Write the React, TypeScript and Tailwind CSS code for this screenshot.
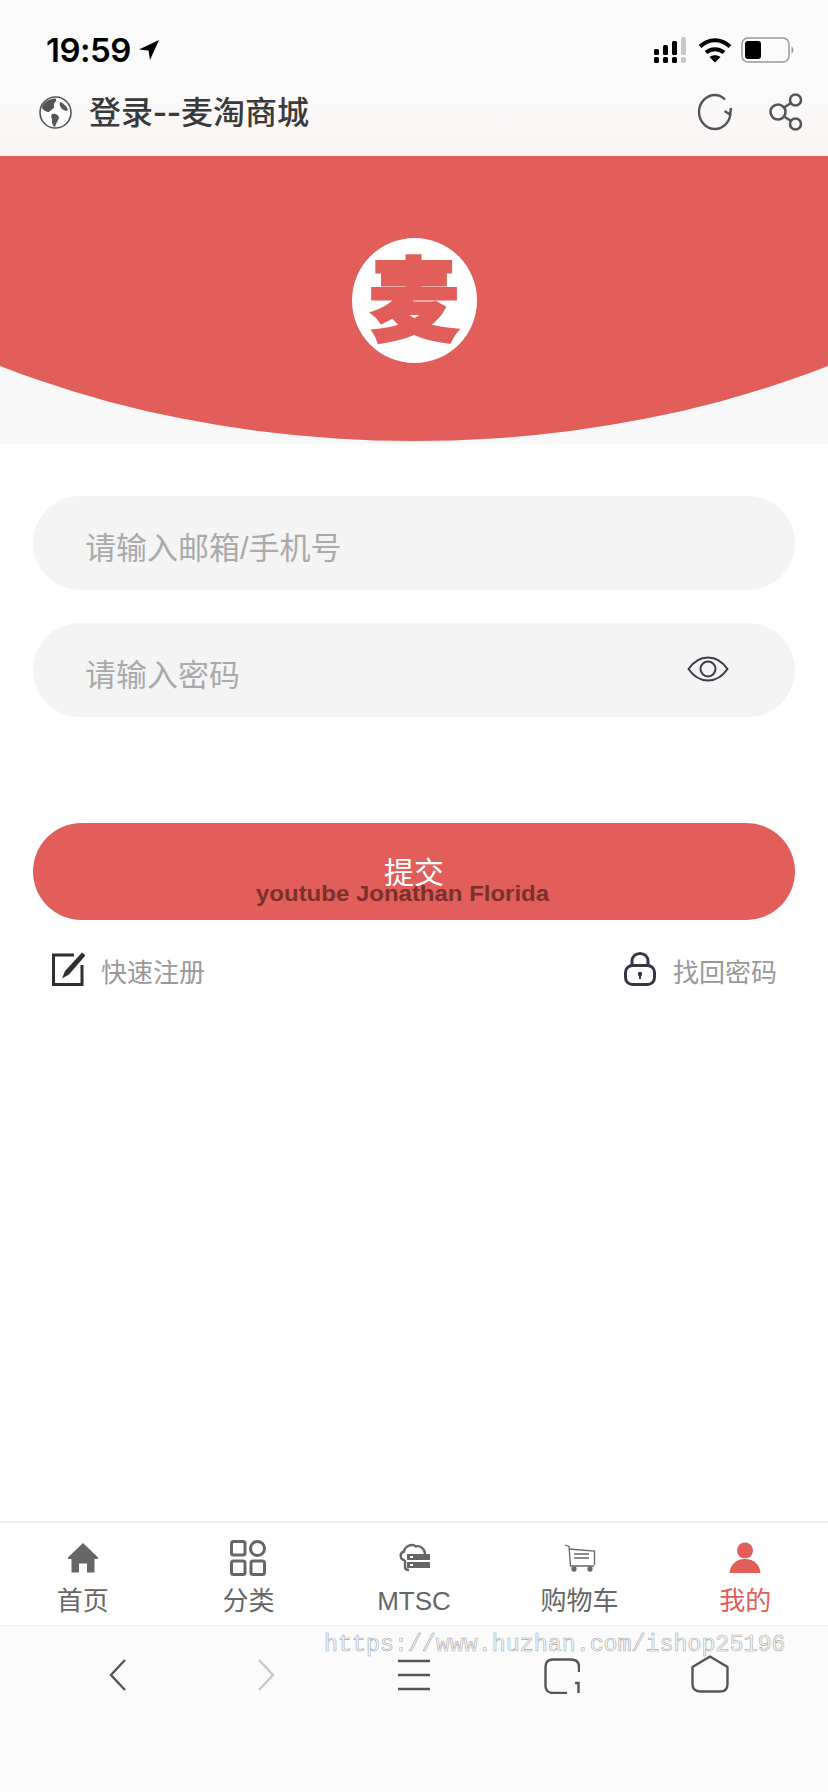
const font = "[font-family:'Liberation_Sans','Noto_Sans_CJK_SC',sans-serif]";

function StatusIcons() {
  return (
    <div className="-mr-[7px] flex items-center gap-[12px]">
      <svg width="32" height="28" viewBox="0 0 32 28">
        <g fill="#000">
          <rect x="0" y="13" width="5" height="6" rx="1.5" />
          <rect x="0" y="21" width="5" height="6" rx="1.5" />
          <rect x="9" y="9" width="5" height="10" rx="1.5" />
          <rect x="9" y="21" width="5" height="6" rx="1.5" />
          <rect x="18" y="5" width="5" height="14" rx="1.5" />
          <rect x="18" y="21" width="5" height="6" rx="1.5" />
        </g>
        <g fill="#c8c8c8">
          <rect x="27" y="1" width="5" height="18" rx="1.5" />
          <rect x="27" y="21" width="5" height="6" rx="1.5" />
        </g>
      </svg>
      <svg width="34" height="26" viewBox="0 0 34 26">
        <path d="M2 9.500C11 1 23 1 32 9.500" fill="none" stroke="#000" strokeWidth="4" />
        <path d="M8 15.500C13 11 21 11 26 15.500" fill="none" stroke="#000" strokeWidth="4" />
        <path d="M11.500 20 17 25.500 22.500 20C19 17.500 15 17.500 11.500 20Z" fill="#000" />
      </svg>
      <svg width="54" height="26" viewBox="0 0 54 26" className="-ml-[3px]">
        <rect x="1" y="1" width="47" height="24" rx="6" fill="none" stroke="#999" strokeWidth="1.500" />
        <rect x="4" y="4" width="16" height="18" rx="3" fill="#000" />
        <path d="M50.500 9.500C53 10.500 53 15.500 50.500 16.500Z" fill="#999" />
      </svg>
    </div>
  );
}

function Header() {
  return (
    <header className="h-[156px] bg-gradient-to-b from-[#fbfbfb] from-50% to-[#faf5f4] px-[40px]">
      <div className="mt-[32px] flex h-[36px] items-center justify-between">
        <div className="ml-[6px] flex items-center gap-[7px]">
          <span className="text-[33px] leading-[36px] font-semibold tracking-[-0.5px] text-black [font-family:'Inter',sans-serif]">
            19:59
          </span>
          <svg width="22" height="22" viewBox="0 0 22 22">
            <path d="M21 1 1 10.500 10.500 11.500 12 21Z" fill="#000" />
          </svg>
        </div>
        <StatusIcons />
      </div>
      <div className="mt-[24px] -mr-[15px] -ml-[1px] flex h-[40px] items-center justify-between">
        <div className="flex items-center gap-[17px]">
          <svg width="33" height="33" viewBox="0 0 33 33">
            <circle cx="16.500" cy="16.500" r="15.500" fill="#fff" stroke="#555" strokeWidth="1.600" />
            <path d="M8 5C11 3 16 2 17 3C18 6 14 7 15 10C16 12 12 14 10 16C7 16 4 14 3 12C3 9 5 7 8 5Z" fill="#555" />
            <path d="M13 18C16 17 20 19 20 22C19 25 17 27 16 31C13 30 13 26 13 23C12 21 12 19 13 18Z" fill="#555" />
            <path d="M21 6C24 7 28 10 29 14C27 16 25 14 23 13C21 11 20 8 21 6Z" fill="#555" />
          </svg>
          <span className={`text-[32px] leading-none font-medium text-[#3a3a3a] ${font}`}>
            登录<span className="align-[-2px] text-[42px] leading-none font-normal">--</span>麦淘商城
          </span>
        </div>
        <div className="flex items-center gap-[36px]">
          <svg width="36" height="38" viewBox="0 0 36 38" fill="none" stroke="#555" strokeWidth="2.400">
            <path d="M28 6.500C25 3.500 22 2 18 2C9.500 2 2 9.500 2 19C2 28.500 9.500 36 18 36C26 36 33 29 33.500 20" />
            <path d="M34 15 33 21.500 27.500 18" />
          </svg>
          <svg width="34" height="38" viewBox="0 0 34 38" fill="none" stroke="#555" strokeWidth="2.600">
            <circle cx="9" cy="19" r="7.500" />
            <circle cx="26.500" cy="7" r="5.500" />
            <circle cx="26.500" cy="31" r="5.500" />
            <path d="M15 14.500 22 10M15 23.500 22 28" />
          </svg>
        </div>
      </div>
    </header>
  );
}

function Hero() {
  return (
    <div className="h-[288px] bg-[#f8f8f8]">
      <div className="flex h-[285px] justify-center bg-[#e15e5a] pt-[82px] [clip-path:ellipse(800px_520px_at_50%_-235px)]">
        <div className="flex h-[125px] w-[125px] items-center justify-center rounded-full bg-white pb-[14px]">
          <span className="text-[90px] leading-none font-black text-[#e15e5a] [-webkit-text-stroke:3px_#e15e5a] [font-family:'Noto_Sans_CJK_SC',sans-serif]">
            麦
          </span>
        </div>
      </div>
    </div>
  );
}

function LoginForm() {
  return (
    <div className="px-[33px] pt-[52px]">
      <div className="flex h-[94px] items-center rounded-full bg-[#f4f4f4] px-[52px]">
        <input
          placeholder="请输入邮箱/手机号"
          className={`w-full bg-transparent pt-[12px] text-[31px] outline-none placeholder:text-[#aaaaaa] ${font}`}
        />
      </div>
      <div className="mt-[33px] flex h-[94px] items-center justify-between rounded-full bg-[#f4f4f4] pr-[66px] pl-[52px]">
        <input
          placeholder="请输入密码"
          className={`w-[400px] bg-transparent pt-[12px] text-[31px] outline-none placeholder:text-[#aaaaaa] ${font}`}
        />
        <svg width="42" height="26" viewBox="0 0 42 26" fill="none" stroke="#3b3b4a" strokeWidth="2" className="-mt-[2px]">
          <path d="M1.500 13C7 5 14 1.500 21 1.500C28 1.500 35 5 40.500 13C35 21 28 24.500 21 24.500C14 24.500 7 21 1.500 13Z" />
          <circle cx="21" cy="13" r="7.500" />
        </svg>
      </div>
      <button className="relative mt-[106px] block h-[97px] w-full rounded-full bg-[#e15e5a] pt-[2px] text-center">
        <span className={`text-[30px] text-white ${font}`}>提交</span>
        <span className="absolute top-[59px] left-[223px] origin-left scale-x-[1.09] text-[22px] leading-[24px] font-bold whitespace-nowrap text-[#7c2f2d] [font-family:'Liberation_Sans',sans-serif]">
          youtube Jonathan Florida
        </span>
      </button>
      <div className="mt-[32px] flex items-center justify-between pr-[18px] pl-[19px]">
        <div className="flex items-center gap-[16px]">
          <svg width="33" height="34" viewBox="0 0 33 34">
            <path d="M22 3H1.500V32.500H30V13" fill="none" stroke="#2f2f2f" strokeWidth="3" />
            <path d="M30 0.500 33.500 3.500 17 22.500 10 26.500 13 19Z" fill="#2f2f2f" />
          </svg>
          <span className={`pt-[8px] text-[26px] leading-none text-[#999999] ${font}`}>快速注册</span>
        </div>
        <div className="flex items-center gap-[17px]">
          <svg width="32" height="34" viewBox="0 0 32 34" fill="none" stroke="#353545" strokeWidth="3">
            <path d="M8 15V9.500C8 4.500 11.500 1.500 16 1.500C20.500 1.500 24 4.500 24 9.500V15" />
            <rect x="1.500" y="13.500" width="29" height="19" rx="7" />
            <circle cx="16" cy="22" r="2.200" fill="#353545" stroke="none" />
            <path d="M16 22V27" strokeWidth="2" />
          </svg>
          <span className={`pt-[8px] text-[26px] leading-none text-[#999999] ${font}`}>找回密码</span>
        </div>
      </div>
    </div>
  );
}

const tabs = [
  {
    label: "首页",
    color: "text-[#666666]",
    icon: (
      <svg width="32" height="32" viewBox="0 0 32 32">
        <path d="M16 1 31 15.500V17H27.500V30.500H20V21.500H12V30.500H4.500V17H1V15.500Z" fill="#666" />
      </svg>
    ),
  },
  {
    label: "分类",
    color: "text-[#666666]",
    icon: (
      <svg width="36" height="36" viewBox="0 0 36 36" fill="none" stroke="#666" strokeWidth="3">
        <rect x="1.500" y="1.500" width="13.500" height="13.500" rx="2" />
        <circle cx="27.500" cy="8.500" r="7" />
        <rect x="1.500" y="21" width="13.500" height="13.500" rx="2" />
        <rect x="21" y="21" width="13.500" height="13.500" rx="2" />
      </svg>
    ),
  },
  {
    label: "MTSC",
    color: "text-[#666666]",
    icon: (
      <svg width="32" height="30" viewBox="0 0 32 30">
        <path d="M7 17C2 17 1 10 6 8.500C7 3 14 0 18 3.500C22 2 27 6 27 11" fill="none" stroke="#666" strokeWidth="2.400" />
        <rect x="9" y="11" width="23" height="6" fill="#666" />
        <rect x="9" y="19" width="23" height="6" fill="#666" />
        <rect x="12" y="13" width="3" height="2" fill="#fff" />
        <rect x="12" y="21" width="3" height="2" fill="#fff" />
        <path d="M7 17V24C7 26 9 27 11 27" fill="none" stroke="#666" strokeWidth="2.400" />
      </svg>
    ),
  },
  {
    label: "购物车",
    color: "text-[#666666]",
    icon: (
      <svg width="32" height="28" viewBox="0 0 32 28" fill="none" stroke="#666" strokeWidth="1.300">
        <path d="M1 1 5 2.500 6.500 22H30" />
        <path d="M5 5 30.500 7V21" />
        <path d="M10 10H25M10 14H25" />
        <circle cx="10" cy="25" r="2" fill="#666" />
        <circle cx="26" cy="25" r="2" fill="#666" />
      </svg>
    ),
  },
  {
    label: "我的",
    color: "text-[#e15e5a]",
    icon: (
      <svg width="32" height="32" viewBox="0 0 32 32" fill="#e15e5a">
        <circle cx="16" cy="8.500" r="8" />
        <path d="M0.500 31C1 23 7 17 16 17C25 17 31 23 31.500 31Z" />
      </svg>
    ),
  },
];

function TabBar() {
  return (
    <nav className="grid h-[105px] grid-cols-5 border-t-2 border-b border-t-[#eeeeee] border-b-[#eeeeee] bg-white">
      {tabs.map((t) => (
        <div key={t.label} className="flex flex-col items-center pt-[17px]">
          <div className="flex h-[36px] items-center justify-center">{t.icon}</div>
          <span className={`mt-[9px] text-[26px] leading-[32px] ${t.color} ${font}`}>{t.label}</span>
        </div>
      ))}
    </nav>
  );
}

function BrowserBar() {
  return (
    <div className="relative grid h-[166px] grid-cols-5 items-start justify-items-center bg-[#fbfbfb] px-[44px] pt-[32px]">
      <svg width="18" height="34" viewBox="0 0 18 34" fill="none" stroke="#555" strokeWidth="2.400">
        <path d="M16 2 2 17 16 32" />
      </svg>
      <svg width="18" height="34" viewBox="0 0 18 34" fill="none" stroke="#c8c8c8" strokeWidth="2.400">
        <path d="M2 2 16 17 2 32" />
      </svg>
      <svg width="34" height="34" viewBox="0 0 34 34" fill="none" stroke="#555" strokeWidth="2.400">
        <path d="M1 3H33M1 17H33M1 31H33" />
      </svg>
      <svg width="36" height="36" viewBox="0 0 36 36" fill="none" stroke="#555" strokeWidth="2.400">
        <path d="M23 35H9C4 35 1.500 32 1.500 28V9C1.500 4 4 1.500 9 1.500H27C32 1.500 35 4 35 9V14" />
        <path d="M31 25H34.500V35" />
      </svg>
      <svg width="38" height="38" viewBox="0 0 38 38" fill="none" stroke="#555" strokeWidth="2.400" className="-mt-[3px]">
        <path d="M19 1.500 36.500 12V29C36.500 33.500 34 36.500 29 36.500H9C4 36.500 1.500 33.500 1.500 29V12Z" strokeLinejoin="round" />
      </svg>
      <span className="absolute top-[4px] left-[324px] text-[23.300px] leading-[30px] whitespace-nowrap text-[#fbfbfb] [-webkit-text-stroke:0.6px_#a8a8a8] [font-family:'Liberation_Mono',monospace]">
        https://www.huzhan.com/ishop25196
      </span>
    </div>
  );
}

export default function App() {
  return (
    <div className="flex h-[1792px] w-[828px] flex-col overflow-hidden bg-white">
      <Header />
      <Hero />
      <div className="flex-1">
        <LoginForm />
      </div>
      <TabBar />
      <BrowserBar />
    </div>
  );
}
